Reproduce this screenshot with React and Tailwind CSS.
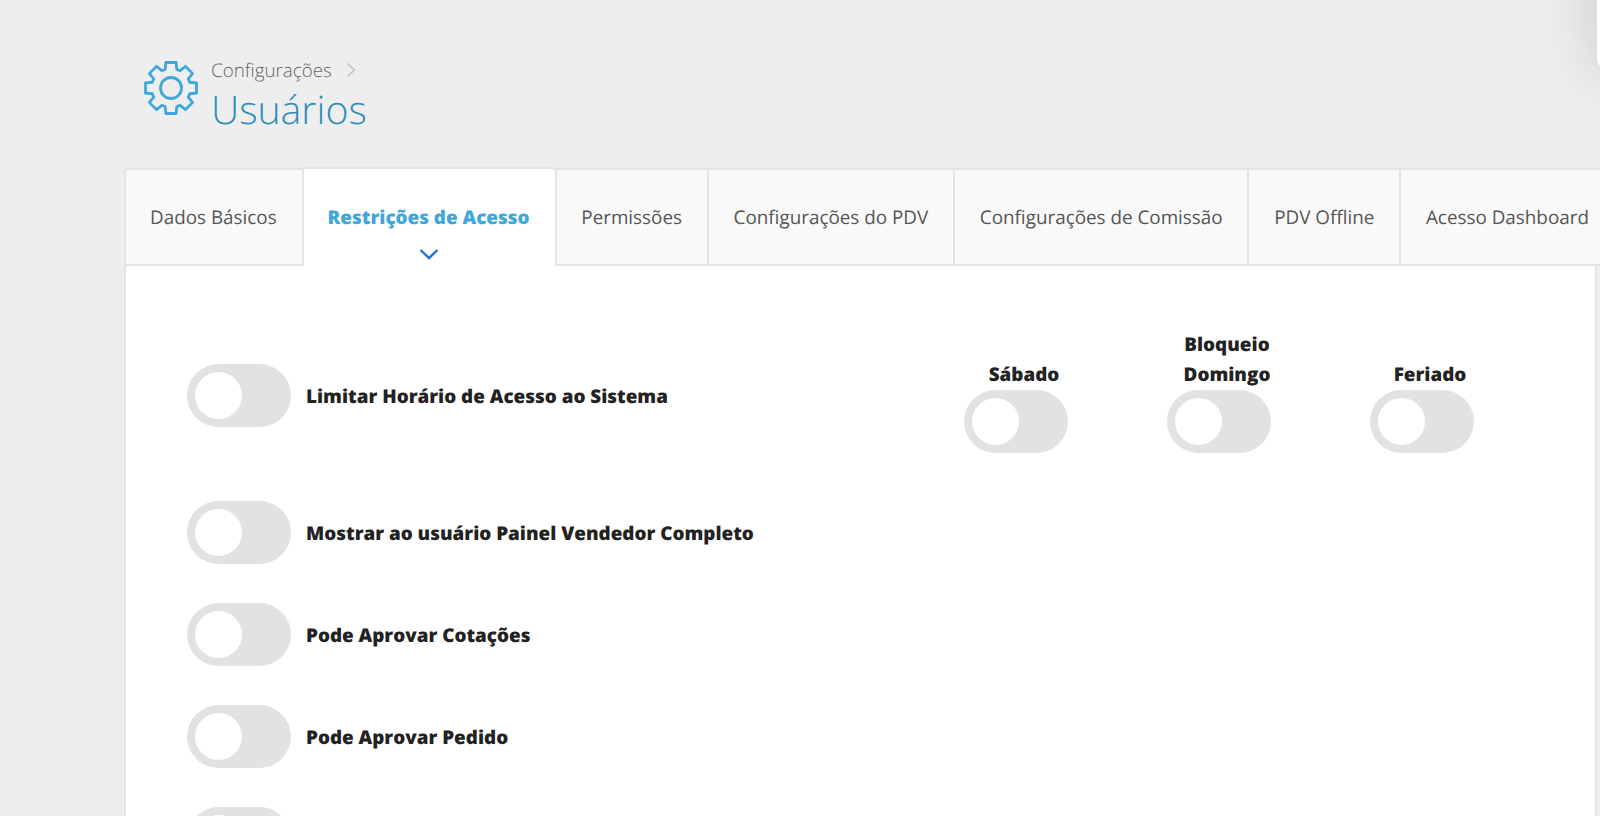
import React from 'react';

const openSans = { fontFamily: '"Open Sans", sans-serif' };

const tabs = [
  { label: 'Dados Básicos' },
  { label: 'Restrições de Acesso', active: true },
  { label: 'Permissões' },
  { label: 'Configurações do PDV' },
  { label: 'Configurações de Comissão' },
  { label: 'PDV Offline' },
  { label: 'Acesso Dashboard' },
];

// 8 tooth cog outline
const cogPath = (() => {
  const cx = 30;
  const cy = 30;
  const outer = 26;
  const root = 19.5;
  const pts = [];
  for (let i = 0; i < 8; i++) {
    const a = (i * Math.PI) / 4 - Math.PI / 2;
    const w1 = 0.3;
    const w2 = 0.2;
    const p = (r, t) => `${(cx + r * Math.cos(t)).toFixed(2)} ${(cy + r * Math.sin(t)).toFixed(2)}`;
    pts.push(`${i === 0 ? 'M' : 'L'}${p(root, a - w1)}`);
    pts.push(`L${p(outer, a - w2)}`);
    pts.push(`L${p(outer, a + w2)}`);
    pts.push(`L${p(root, a + w1)}`);
    pts.push(`A${root} ${root} 0 0 1 ${p(root, a + Math.PI / 4 - w1)}`);
  }
  return pts.join(' ') + ' Z';
})();

const Toggle = () => (
  <div className="w-[104px] h-[63px] shrink-0 rounded-full bg-[#e2e2e2] flex items-center pl-[8px]">
    <div className="w-[47px] h-[47px] rounded-full bg-white"></div>
  </div>
);

const Label = ({ children }) => (
  <span className="text-[18.85px] leading-[30px] font-extrabold text-[#222222]">{children}</span>
);

const DayToggle = ({ label }) => (
  <div className="w-[120px] flex flex-col justify-end">
    <div className="text-center text-[18.85px] leading-[29.5px] font-extrabold text-[#222222] mb-[1px]">{label}</div>
    <Toggle />
  </div>
);

export default function App() {
  return (
    <div className="relative h-[816px] w-[1600px] overflow-hidden bg-[#eeeeee] [text-rendering:geometricPrecision]" style={openSans}>
      {/* corner of the side panel */}
      <div className="absolute right-[-61px] top-[-60px] h-[132px] w-[64px] rounded-[14px] bg-white shadow-[0_0_60px_rgba(0,0,0,0.16)]"></div>

      {/* Page title */}
      <div className="flex items-start h-[168px] pl-[144px] pt-[58px]">
        <svg width="60" height="60" viewBox="0 0 60 60" fill="none" stroke="#3fa7dc" strokeWidth="2.8" strokeLinejoin="round" className="-ml-[3px]">
          <path d={cogPath} />
          <circle cx="30" cy="30" r="10.5" />
        </svg>
        <div className="ml-[10px]">
          <div className="flex items-center text-[18.8px] leading-[24px] font-light text-[#666666]">
            Configurações
            <svg width="10" height="16" viewBox="0 0 10 16" fill="none" stroke="#c4c4c4" strokeWidth="1.6" className="ml-[14px]">
              <path d="M1.5 1.5L8.5 8L1.5 14.5" />
            </svg>
          </div>
          <div className="mt-[2px] text-[39.2px] leading-[52px] font-light text-[#2e8fb8]">Usuários</div>
        </div>
      </div>

      {/* Card */}
      <div className="ml-[124px] w-[1473px]">
        <div className="flex h-[98px]">
          {tabs.map((tab) =>
            tab.active ? (
              <div
                key={tab.label}
                className="relative shrink-0 -mt-px h-[99px] pl-[24px] pr-[25px] flex items-center justify-center bg-white border-x-2 border-t-2 border-[#e1e5ea] rounded-t-[4px] text-[18.85px] font-extrabold text-[#3fa7dc]"
              >
                {tab.label}
                <svg width="20" height="12" viewBox="0 0 20 12" fill="none" stroke="#1f6fe0" strokeWidth="2.4" className="absolute bottom-[6px] left-1/2 -translate-x-1/2">
                  <path d="M1.5 2L10 10L18.5 2" />
                </svg>
              </div>
            ) : (
              <div
                key={tab.label}
                className="shrink-0 px-[24.8px] flex items-center bg-[#f9f9f9] border-t-2 border-b-2 border-r-2 border-[#e1e5ea] first:border-l-2 first:border-r-0 first:pl-[24px] first:pr-[25px] first:rounded-tl-[3px] text-[18.85px] text-[#555555]"
              >
                {tab.label}
              </div>
            )
          )}
        </div>

        <div className="h-[560px] bg-white border-x-2 border-[#e1e5ea] pl-[61px] pr-[100px] pt-[64px]">
          <div className="flex items-start h-[125px]">
            <div className="flex items-center gap-[15px] mt-[34px] w-[777px]">
              <Toggle />
              <Label>Limitar Horário de Acesso ao Sistema</Label>
            </div>
            <div className="flex gap-[83px] h-[123px] items-end">
              <DayToggle label="Sábado" />
              <DayToggle label="Bloqueio Domingo" />
              <DayToggle label="Feriado" />
            </div>
          </div>

          <div className="flex flex-col gap-[39px] mt-[46px]">
            {['Mostrar ao usuário Painel Vendedor Completo', 'Pode Aprovar Cotações', 'Pode Aprovar Pedido', ''].map((label) => (
              <div key={label} className="flex items-center gap-[15px]">
                <Toggle />
                <Label>{label}</Label>
              </div>
            ))}
          </div>
        </div>
      </div>
    </div>
  );
}
